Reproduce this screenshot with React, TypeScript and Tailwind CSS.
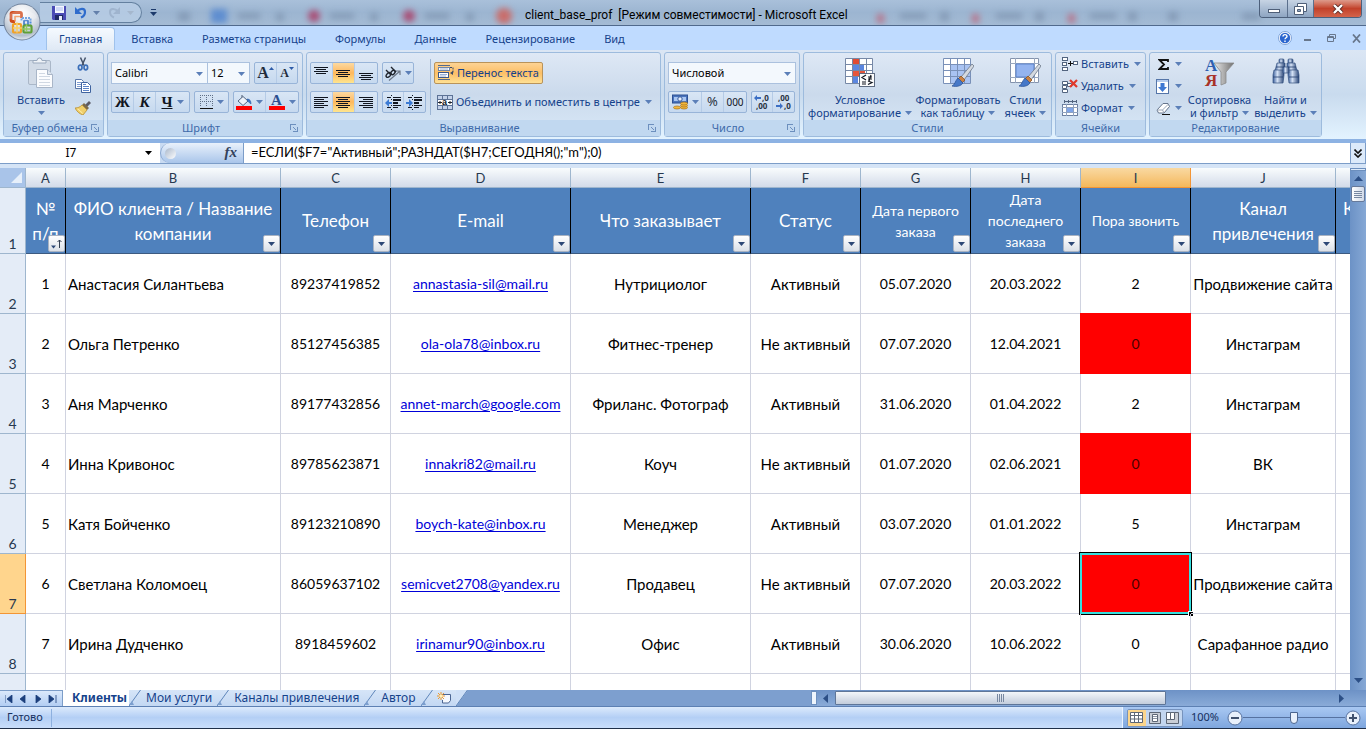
import { useState } from 'react';
import type { ReactNode } from 'react';
import clsx from 'clsx';

/* ---------- data ---------- */

const columns = [
  { letter: 'A', width: 40, title: '№ п/п', sorted: true },
  { letter: 'B', width: 215, title: 'ФИО клиента / Название компании' },
  { letter: 'C', width: 110, title: 'Телефон' },
  { letter: 'D', width: 180, title: 'E-mail' },
  { letter: 'E', width: 180, title: 'Что заказывает' },
  { letter: 'F', width: 110, title: 'Статус' },
  { letter: 'G', width: 110, title: 'Дата первого заказа', small: true },
  { letter: 'H', width: 110, title: 'Дата последнего заказа', small: true },
  { letter: 'I', width: 110, title: 'Пора звонить', small: true },
  { letter: 'J', width: 145, title: 'Канал привлечения' },
];

// columns with words rather than digits or addresses
const wordColumns = [1, 4, 5, 9];

const clients = [
  ['1', 'Анастасия Силантьева', '89237419852', 'annastasia-sil@mail.ru', 'Нутрициолог', 'Активный', '05.07.2020', '20.03.2022', '2', 'Продвижение сайта'],
  ['2', 'Ольга Петренко', '85127456385', 'ola-ola78@inbox.ru', 'Фитнес-тренер', 'Не активный', '07.07.2020', '12.04.2021', '0', 'Инстаграм'],
  ['3', 'Аня Марченко', '89177432856', 'annet-march@google.com', 'Фриланс. Фотограф', 'Активный', '31.06.2020', '01.04.2022', '2', 'Инстаграм'],
  ['4', 'Инна Кривонос', '89785623871', 'innakri82@mail.ru', 'Коуч', 'Не активный', '01.07.2020', '02.06.2021', '0', 'ВК'],
  ['5', 'Катя Бойченко', '89123210890', 'boych-kate@inbox.ru', 'Менеджер', 'Активный', '03.07.2020', '01.01.2022', '5', 'Инстаграм'],
  ['6', 'Светлана Коломоец', '86059637102', 'semicvet2708@yandex.ru', 'Продавец', 'Не активный', '07.07.2020', '20.03.2022', '0', 'Продвижение сайта'],
  ['7', 'Ирина Дудченко', '8918459602', 'irinamur90@inbox.ru', 'Офис', 'Активный', '30.06.2020', '10.06.2022', '0', 'Сарафанное радио'],
];

const ribbonTabs = ['Главная', 'Вставка', 'Разметка страницы', 'Формулы', 'Данные', 'Рецензирование', 'Вид'];
const sheets = ['Клиенты', 'Мои услуги', 'Каналы привлечения', 'Автор'];

/* ---------- icons ---------- */

function Caret({ className = 'text-[#5b7fb8]' }: { className?: string }) {
  return (
    <svg width="7" height="4" viewBox="0 0 7 4" className={clsx('shrink-0', className)} aria-hidden="true">
      <path d="M0 0h7L3.500 4z" fill="currentColor" />
    </svg>
  );
}

function OfficeLogo() {
  return (
    <svg width="38" height="38" viewBox="0 0 38 38" aria-hidden="true">
      <defs>
        <radialGradient id="orb" cx="50%" cy="25%" r="80%">
          <stop offset="0" stopColor="#ffffff" />
          <stop offset="0.500" stopColor="#dfe3ea" />
          <stop offset="0.800" stopColor="#b4bfcd" />
          <stop offset="1" stopColor="#f4f8fc" />
        </radialGradient>
      </defs>
      <circle cx="19" cy="19" r="18.500" fill="#71839c" />
      <circle cx="19" cy="19" r="17.500" fill="url(#orb)" />
      <g fill="none" strokeLinejoin="round">
        <path d="M12 18.500H9.500a1.500 1.500 0 0 1-1.500-1.500v-6A1.500 1.500 0 0 1 9.500 9.500h7.500A1.500 1.500 0 0 1 18.500 11v4" stroke="#cf4a1b" strokeWidth="2.800" />
        <path d="M12 18.500v-5h5" stroke="#f08a4a" strokeWidth="1.600" />
        <path d="M18.500 17.500v-2.500h9v7.500H25" stroke="#4d8edb" strokeWidth="2" strokeDasharray="2 1" />
        <rect x="21" y="17.500" width="4" height="4" stroke="#3d78ca" strokeWidth="1.600" />
        <rect x="10" y="21" width="8" height="8.500" rx="1" stroke="#f0a22a" strokeWidth="2.200" />
        <path d="M14 19.500v10M10 25h9" stroke="#f9cf66" strokeWidth="1.600" />
        <rect x="20.500" y="22.500" width="8" height="7" rx="1" stroke="#5f9f38" strokeWidth="2.200" />
        <path d="M23.500 21v8M19 26h9" stroke="#93c963" strokeWidth="1.600" />
      </g>
      <path d="M4 15C6 5 32 5 34 15c-8 4-22 4-30 0z" fill="#fff" opacity=".22" />
    </svg>
  );
}

function SaveIcon() {
  return (
    <svg width="14" height="14" viewBox="0 0 14 14" aria-hidden="true">
      <path d="M0 0h14v14H1l-1-1z" fill="#4a4bb5" />
      <path d="M3 0h9v7H3z" fill="#f3f6ff" />
      <path d="M4 2h7M4 4h7" stroke="#aebcf0" />
      <path d="M3 9h8v5H3z" fill="#202a66" />
      <path d="M7 10h3v4H7z" fill="#e7ecfb" />
    </svg>
  );
}

function UndoIcon() {
  return (
    <svg width="13" height="13" viewBox="0 0 13 13" aria-hidden="true">
      <path d="M3 5.500C6 2 11 2 11 6c0 2.500-1.500 4.500-4 5.500" fill="none" stroke="#2f6ccc" strokeWidth="2.200" />
      <path d="M1 1v7h7z" fill="#2f6ccc" />
    </svg>
  );
}

function RedoIcon() {
  return (
    <svg width="13" height="13" viewBox="0 0 13 13" aria-hidden="true">
      <path d="M10 5.500C7 2 2 2 2 6c0 2.500 1.500 4.500 4 5.500" fill="none" stroke="#9fb4ce" strokeWidth="2" />
      <path d="M12 1v7H5z" fill="#9fb4ce" />
    </svg>
  );
}

function PasteIcon() {
  return (
    <svg width="28" height="32" viewBox="0 0 28 32" aria-hidden="true">
      <rect x="1.500" y="3.500" width="22" height="24" rx="1.500" fill="#d2dbe7" stroke="#aab7c8" />
      <path d="M6 6V3.500h4a2.500 2.500 0 0 1 5 0h4V6z" fill="#eef2f7" stroke="#9aa9bd" />
      <path d="M9.500 12.500h11l5 5v13h-16z" fill="#fbfcfe" stroke="#a9b6c8" />
      <path d="M20.500 12.500v5h5" fill="#dfe6ef" stroke="#a9b6c8" />
      <path d="M12 16.500h6M12 19.500h11M12 22.500h11M12 25.500h11M12 28.500h11" stroke="#d0d8e3" />
    </svg>
  );
}

function CutIcon() {
  return (
    <svg width="12" height="14" viewBox="0 0 12 14" aria-hidden="true">
      <path d="M3.500 .5l3.500 8M8.500 .5L5 8.500" stroke="#44526a" strokeWidth="1.500" fill="none" />
      <ellipse cx="3.200" cy="10.500" rx="1.800" ry="2.300" fill="none" stroke="#3b6fb9" strokeWidth="1.700" />
      <ellipse cx="8.800" cy="10.500" rx="1.800" ry="2.300" fill="none" stroke="#3b6fb9" strokeWidth="1.700" />
    </svg>
  );
}

function CopyIcon() {
  return (
    <svg width="16" height="14" viewBox="0 0 16 14" aria-hidden="true">
      <path d="M.5 .5h6l2 2v7h-8z" fill="#fff" stroke="#5876a8" />
      <path d="M2 3.500h4M2 5.500h5M2 7.500h5" stroke="#7d9bd0" />
      <path d="M6.500 3.500h6l3 3v7h-9z" fill="#fff" stroke="#3f639f" />
      <path d="M8 7.500h6M8 9.500h6M8 11.500h6M8 5.500h3" stroke="#5c83c6" />
    </svg>
  );
}

function BrushIcon() {
  return (
    <svg width="16" height="14" viewBox="0 0 16 14" aria-hidden="true">
      <path d="M10 4l4-4 2 2-4 4z" fill="#5b5b66" />
      <path d="M7 4l2-2 5 5-2 2z" fill="#7b6a4a" />
      <path d="M7 4l5 5-4 5C5 13 2 11 0 7c3 0 5-1 7-3z" fill="#f0cf6b" stroke="#b98f2e" strokeWidth=".8" />
      <path d="M2.500 8c2 1 3.500 2.500 5 4.500" stroke="#fff0b0" fill="none" />
    </svg>
  );
}

function Lines({ rows, tall }: { rows: [number, number, number][]; tall?: boolean }) {
  return (
    <svg width="15" height={tall ? 13 : 15} viewBox={tall ? '0 0 15 13' : '0 0 15 15'} shapeRendering="crispEdges" aria-hidden="true">
      {rows.map(([x, y, w]) => (
        <rect key={y} x={x} y={y} width={w} height="1" fill="#10151f" />
      ))}
    </svg>
  );
}

function OrientationIcon() {
  return (
    <svg width="16" height="15" viewBox="0 0 16 15" aria-hidden="true">
      <path d="M4 14.500L14.500 5.500M11 5h4v4" stroke="#6b7687" fill="none" strokeWidth="1.200" />
      <path d="M1 4l5 5M6 1l5 5" stroke="#20252e" strokeWidth="1.400" />
      <ellipse cx="3.500" cy="9" rx="2.800" ry="1.800" transform="rotate(-45 3.500 9)" fill="none" stroke="#20252e" strokeWidth="1.400" />
      <ellipse cx="8" cy="6.500" rx="2.400" ry="1.700" transform="rotate(-45 8 6.500)" fill="none" stroke="#20252e" strokeWidth="1.400" />
    </svg>
  );
}

function IndentIcon({ right }: { right?: boolean }) {
  return (
    <svg width="17" height="15" viewBox="0 0 17 15" aria-hidden="true">
      <g fill="#10151f" shapeRendering="crispEdges">
        <rect x="2" y="2" width="4" height="1" />
        <rect x="8" y="2" width="8" height="1" />
        <rect x="8" y="4" width="8" height="2" />
        <rect x="8" y="7" width="5" height="2" />
        <rect x="8" y="10" width="8" height="1" />
        <rect x="2" y="12" width="4" height="1" />
        <rect x="8" y="12" width="5" height="1" />
        <rect x="6" y="0" width="1" height="1" />
        <rect x="6" y="4" width="1" height="1" />
        <rect x="6" y="10" width="1" height="1" />
        <rect x="6" y="14" width="1" height="1" />
      </g>
      <path d={right ? 'M0 7h3V4l4 4-4 4V9H0z' : 'M7 7H4V4L0 8l4 4V9h3z'} fill="#3c7bd4" />
    </svg>
  );
}

function WrapIcon() {
  return (
    <svg width="16" height="16" viewBox="0 0 16 16" aria-hidden="true">
      <path d="M0 .5h12M0 14.500h12" stroke="#52698f" />
      <rect x=".5" y="2.500" width="11" height="3" fill="#fff" stroke="#6f86ab" />
      <rect x=".5" y="7.500" width="10" height="5" fill="#fff" stroke="#3d598b" />
      <path d="M2 9.500h7M2 11h6M2 4h8" stroke="#9db2d6" />
      <path d="M12 2.500h3v5" stroke="#3a4a66" fill="none" strokeDasharray="2 1" />
      <path d="M12 8l3-2v4z" fill="#3a4a66" />
    </svg>
  );
}

function MergeIcon() {
  return (
    <svg width="16" height="15" viewBox="0 0 16 15" aria-hidden="true">
      <rect x=".5" y=".5" width="15" height="14" fill="#fff" stroke="#5c7296" />
      <path d="M1 2.500h14M1 12.500h14" stroke="#c3d2ea" strokeWidth="3" />
      <path d="M5.500 0v4M10.500 0v4M5.500 11v4M10.500 11v4M0 4.500h16M0 10.500h16" stroke="#5c7296" />
      <path d="M1 7.500h4M11 7.500h4M3 6v3M13 6v3" stroke="#20252e" />
      <text x="5" y="10" fontFamily="Liberation Sans, sans-serif" fontSize="9" fontWeight="700" fill="#101622">a</text>
    </svg>
  );
}

function BorderIcon() {
  return (
    <svg width="13" height="14" viewBox="0 0 13 14" shapeRendering="crispEdges" aria-hidden="true">
      <path d="M.5 0v12M6.500 0v12M12.500 0v12M0 .5h13M0 6.500h13" stroke="#5f6f87" strokeDasharray="1 1" />
      <rect y="13" width="13" height="1" fill="#111" />
    </svg>
  );
}

function FillIcon() {
  return (
    <svg width="16" height="15" viewBox="0 0 16 15" aria-hidden="true">
      <path d="M6 0v5" stroke="#44526a" />
      <path d="M7 1.500l5 4.500-5 4.500L2 6z" fill="#eef3fa" stroke="#526480" />
      <path d="M11 4c3 0 4 2 4 5-1.500-1-2-2-3.500-3z" fill="#3a74c8" stroke="#2d5c9f" strokeWidth=".6" />
      <path d="M0 11h16v4H0z" fill="#ff0000" />
    </svg>
  );
}

function LauncherIcon() {
  return (
    <svg width="8" height="8" viewBox="0 0 8 8" shapeRendering="crispEdges" aria-hidden="true">
      <path d="M.5 6V.5H6" fill="none" stroke="#6c8fbe" />
      <path d="M3 3l3 3M7.500 3v4.500H3" fill="none" stroke="#6c8fbe" />
    </svg>
  );
}

function MoneyIcon() {
  return (
    <svg width="16" height="16" viewBox="0 0 16 16" aria-hidden="true">
      <rect x=".5" y="1" width="15" height="8" fill="#4a74bd" stroke="#2d5094" />
      <path d="M2 3h12v4H2z" fill="#a9c6f2" />
      <circle cx="8" cy="5" r="2.200" fill="#e6effd" stroke="#36599a" />
      <g fill="#f2b83d" stroke="#a8701a" strokeWidth=".7">
        <ellipse cx="12" cy="13.500" rx="3.500" ry="1.500" />
        <ellipse cx="12" cy="11.500" rx="3.500" ry="1.500" />
        <ellipse cx="12" cy="9.500" rx="3.500" ry="1.500" />
        <ellipse cx="5" cy="13.500" rx="3.500" ry="1.500" />
      </g>
    </svg>
  );
}

function DecimalIcon({ less }: { less?: boolean }) {
  return (
    <svg width="16" height="16" viewBox="0 0 16 16" aria-hidden="true">
      <g fontFamily="Noto Sans, sans-serif" fontSize="8" fontWeight="700" fill="#2a3443">
        <text x={less ? 2 : 8} y="7">{less ? ',00' : ',0'}</text>
        <text x={less ? 8 : 2} y="15">{less ? ',0' : ',00'}</text>
      </g>
      <path d={less ? 'M0 11h4V9l3 3-3 3v-2H0z' : 'M7 3H3V1L0 4l3 3V5h4z'} fill="#3c6fc4" />
    </svg>
  );
}

function CondFormatIcon() {
  return (
    <svg width="30" height="29" viewBox="0 0 30 29" aria-hidden="true">
      <path d="M.5 .5h27v25H.5z" fill="#fff" />
      <path d="M7 0h7v6H7z" fill="#e04a32" />
      <path d="M7 6h12v6H7z" fill="#5a86e0" />
      <path d="M7 13h13v6H7z" fill="#e5563c" />
      <path d="M7 19h6v6H7z" fill="#5a86e0" />
      <path d="M.5 .5h27v25H.5zM.5 6.500h27M.5 12.500h27M.5 18.500h27M7.500 0v26M14.500 0v26M21.500 0v26" fill="none" stroke="#7688a6" />
      <rect x="14.500" y="15.500" width="15" height="13" fill="#fdfdfd" stroke="#5e6b80" />
      <path d="M21 17l-4 2.500 4 2.500M17 24h4M17 26h4M23 19h4M23 21h4M26 17l-2 6M23 23l4 1.500-4 2" stroke="#10151f" fill="none" strokeWidth="1.200" />
    </svg>
  );
}

function PaintBrush() {
  return (
    <g>
      <path d="M29 6l2 2L21 22l-3-3z" fill="#d4d9e0" stroke="#6c7788" strokeWidth=".8" />
      <path d="M18 18l4 4-3 3-4-4z" fill="#c98245" stroke="#8d5422" strokeWidth=".8" />
      <path d="M15 20l5 5c-2 3-6 4-11 3 3-1 3-5 6-8z" fill="#4678c8" stroke="#2d5599" strokeWidth=".8" />
    </g>
  );
}

function TableStyleIcon() {
  return (
    <svg width="31" height="30" viewBox="0 0 31 30" aria-hidden="true">
      <path d="M.5 .5h27v25H.5z" fill="#fff" />
      <path d="M7 7h21v18H7z" fill="#a9c3f2" />
      <path d="M.5 .5h27v25H.5zM.5 6.500h27M.5 12.500h27M.5 18.500h27M7.500 0v26M14.500 0v26M21.500 0v26" fill="none" stroke="#7990b8" />
      <PaintBrush />
    </svg>
  );
}

function CellStyleIcon() {
  return (
    <svg width="31" height="30" viewBox="0 0 31 30" aria-hidden="true">
      <path d="M.5 .5h28v24H.5z" fill="#fff" stroke="#8493ad" />
      <path d="M5.500 0v25M24.500 0v25M0 5.500h29M0 19.500h29" stroke="#9aa8bf" />
      <path d="M6 6h18v13H6z" fill="#94b4f0" stroke="#5d83ca" />
      <PaintBrush />
    </svg>
  );
}

function InsertCellsIcon() {
  return (
    <svg width="16" height="14" viewBox="0 0 16 14" shapeRendering="crispEdges" aria-hidden="true">
      <path d="M.5 .5h5v3h-5zM.5 5.500h4v3h-4zM.5 10.500h5v3h-5zM11.500 4.500h4v3h-4z" fill="#fff" stroke="#52647f" />
      <path d="M6 6.500h5M8.500 4v5" stroke="#111" strokeWidth="1" />
    </svg>
  );
}

function DeleteCellsIcon() {
  return (
    <svg width="16" height="14" viewBox="0 0 16 14" aria-hidden="true">
      <path d="M.5 2.500h5v3h-5zM.5 6.500h4v3h-4zM.5 10.500h5v3h-5zM5.500 4.500h4v3h-4z" fill="#fff" stroke="#52647f" />
      <path d="M8 1l7 7M15 1L8 8" stroke="#e0392b" strokeWidth="2.200" />
    </svg>
  );
}

function FormatCellsIcon() {
  return (
    <svg width="16" height="16" viewBox="0 0 16 16" shapeRendering="crispEdges" aria-hidden="true">
      <path d="M2 1.500h12M2.500 0v3M6.500 0v3M10.500 0v3M14.500 0v3" stroke="#52647f" />
      <path d="M.5 4.500h15v11H.5z" fill="#fff" stroke="#6d80a0" />
      <path d="M4.500 4v12M11.500 4v12M0 7.500h16M0 12.500h16" stroke="#8fa1be" />
      <path d="M5 8h6v4H5z" fill="#7fa5e8" />
    </svg>
  );
}

function FillDownIcon() {
  return (
    <svg width="13" height="15" viewBox="0 0 13 15" aria-hidden="true">
      <rect x=".5" y=".5" width="12" height="14" fill="#fff" stroke="#5575a8" />
      <path d="M1 1h11v2H1z" fill="#b6ccee" />
      <path d="M4.500 4h4v4h2.500L6.500 13 2 8h2.500z" fill="#3f78d2" />
    </svg>
  );
}

function EraserIcon() {
  return (
    <svg width="15" height="13" viewBox="0 0 15 13" aria-hidden="true">
      <path d="M7 1.500h5l1.500 3L8 11H2.500L1 8z" fill="#fff" stroke="#66758c" />
      <path d="M1 8h5.500L12.500 2M6.500 8L8 11" fill="none" stroke="#9aa6b8" />
      <path d="M6 12.500h8" stroke="#111" />
    </svg>
  );
}

function SortFilterIcon() {
  return (
    <svg width="31" height="30" viewBox="0 0 31 30" aria-hidden="true">
      <defs>
        <linearGradient id="funnel" x1="0" x2="1">
          <stop offset="0" stopColor="#e9e9e9" />
          <stop offset="1" stopColor="#707070" />
        </linearGradient>
      </defs>
      <path d="M10 5h20l-8 9v11l-5 2V14z" fill="url(#funnel)" stroke="#8a8a8a" strokeWidth=".8" />
      <g fontFamily="Liberation Serif, serif" fontSize="17" fontWeight="700">
        <text x="1" y="13" fill="#2e5fb0">А</text>
        <text x="1" y="28" fill="#a83228">Я</text>
      </g>
    </svg>
  );
}

function BinocularsIcon() {
  return (
    <svg width="28" height="26" viewBox="0 0 28 26" aria-hidden="true">
      <defs>
        <linearGradient id="tube" x1="0" x2="1">
          <stop offset="0" stopColor="#3b5f9c" />
          <stop offset="0.400" stopColor="#d5e2f5" />
          <stop offset="1" stopColor="#2a4678" />
        </linearGradient>
      </defs>
      <g fill="url(#tube)" stroke="#35527f" strokeWidth=".7">
        <rect x="7" y="1" width="5" height="4" rx="1" />
        <rect x="16" y="1" width="5" height="4" rx="1" />
        <path d="M5 5h8v8H3z" />
        <path d="M15 5h8l2 8H15z" />
        <path d="M2 12h10v5l-1 8H1v-8z" />
        <path d="M16 12h10l1 5v8H17l-1-8z" />
        <path d="M11 9h6v6h-6z" />
      </g>
      <path d="M1 19h10M17 19h10M4 9h8M16 9h8" stroke="#233f70" strokeWidth=".8" />
    </svg>
  );
}

function NewSheetIcon() {
  return (
    <svg width="15" height="12" viewBox="0 0 15 12" aria-hidden="true">
      <path d="M4.500 2.500h9v6l-2 2.500h-6V8" fill="#f4f8fe" stroke="#4c6693" />
      <path d="M4 0v8M0 4h8M1 1l6 6M7 1L1 7" stroke="#ee9a2e" />
      <circle cx="4" cy="4" r="1.500" fill="#fff0b8" />
    </svg>
  );
}

function Slash({ last }: { last?: boolean }) {
  return (
    <svg width="12" height="16" viewBox="0 0 12 16" className="shrink-0" aria-hidden="true">
      {last && <path d="M0 0h12L1 15H0z" fill="#cfe0f7" />}
      <path d="M0 16L11.500 0" stroke="#5f86ba" fill="none" />
      {!last && <path d="M0 15l3-4 2 4z" fill="#7c9fce" />}
    </svg>
  );
}

/* ---------- ribbon parts ---------- */

function Group({ label, className, launcher, children }: { label: string; className: string; launcher?: boolean; children: ReactNode }) {
  return (
    <section
      aria-label={label}
      className={clsx(
        'flex h-[85px] shrink-0 flex-col rounded-[3px] border border-[#9dbbdd] bg-linear-to-b from-[#dee8f5] via-[#cbdaec] to-[#d8e8f7]',
        className,
      )}
    >
      <div className="flex min-h-0 flex-1 px-[3px]">{children}</div>
      <div className="flex h-4 items-center bg-[#c1d8f0] px-1 text-[#3e6aaa]">
        <span className="flex-1 text-center whitespace-nowrap">{label}</span>
        {launcher && (
          <button aria-label={`${label}: параметры`}>
            <LauncherIcon />
          </button>
        )}
      </div>
    </section>
  );
}

function ButtonSet({ children }: { children: ReactNode }) {
  return (
    <div className="flex h-[22px] divide-x divide-[#b5cbe6] rounded-[2px] border border-[#98b4d8] bg-linear-to-b from-[#d9e6f5] to-[#c6d9ef]">
      {children}
    </div>
  );
}

function Tool({ label, width = 'w-[22px]', active, children }: { label: string; width?: string; active?: boolean; children: ReactNode }) {
  return (
    <button
      aria-label={label}
      className={clsx('flex items-center justify-center gap-1', width, active && 'bg-linear-to-b from-[#fcd9a0] via-[#fdb85c] to-[#fee58f]')}
    >
      {children}
    </button>
  );
}

function BigButton({ icon, lines, className }: { icon: ReactNode; lines: [string, string]; className: string }) {
  return (
    <button className={clsx('flex shrink-0 flex-col items-center pt-1 leading-[13px]', className)}>
      <span className="flex h-[36px] items-start pt-px">{icon}</span>
      <span className="whitespace-nowrap">{lines[0]}</span>
      <span className="flex h-[13px] items-center gap-1 whitespace-nowrap">
        {lines[1]}
        <Caret />
      </span>
    </button>
  );
}

function Dropdown({ label, value, className }: { label: string; value: string; className: string }) {
  return (
    <div className={clsx('relative flex h-[22px] border border-[#abc1de] bg-[#f3f8fd]', className)}>
      <select aria-label={label} defaultValue={value} className="w-full appearance-none bg-transparent pl-[3px] text-black outline-none">
        <option>{value}</option>
      </select>
      <Caret className="pointer-events-none absolute top-[9px] right-[4px] text-[#5b7fb8]" />
    </div>
  );
}

function TitleBar() {
  return (
    <header className="relative flex h-[26px] shrink-0 items-center overflow-hidden border-b border-[#50698c] bg-linear-to-b from-[#a9c0da] via-[#9cb5d1] to-[#a4bbd4]">
      <svg className="absolute inset-0 h-full w-full blur-[3px]" aria-hidden="true">
        <g fill="#7489a6" opacity=".6">
          <rect x="178" y="12" width="12" height="9" />
          <rect x="238" y="13" width="22" height="6" />
          <rect x="276" y="13" width="8" height="8" />
          <rect x="330" y="13" width="24" height="6" />
          <rect x="370" y="13" width="8" height="8" />
          <rect x="425" y="13" width="24" height="6" />
          <rect x="466" y="13" width="8" height="8" />
          <rect x="900" y="13" width="26" height="6" />
          <rect x="940" y="12" width="9" height="9" />
          <rect x="996" y="13" width="26" height="6" />
          <rect x="1035" y="12" width="9" height="9" />
          <rect x="1090" y="13" width="26" height="6" />
          <rect x="1128" y="12" width="9" height="9" />
          <rect x="1168" y="12" width="10" height="9" />
          <rect x="1242" y="13" width="18" height="7" />
        </g>
        <rect x="211" y="9" width="16" height="14" fill="#4f83d0" opacity=".8" />
        <circle cx="314" cy="16" r="6" fill="#a84a72" />
        <circle cx="409" cy="16" r="6" fill="#a84a72" />
        <circle cx="504" cy="16" r="8" fill="#c96d6b" />
        <rect x="877" y="14" width="7" height="9" fill="#c2566a" opacity=".7" />
        <rect x="972" y="14" width="7" height="9" fill="#c2566a" opacity=".7" />
        <rect x="1068" y="14" width="7" height="9" fill="#c2566a" opacity=".7" />
      </svg>

      <div className="relative ml-10 flex h-[21px] w-[102px] items-center rounded-r-full border border-l-0 border-[#64809f] bg-[#b9cee6]/80 pl-3">
        <button aria-label="Сохранить"><SaveIcon /></button>
        <button aria-label="Отменить" className="ml-2 flex items-center gap-1.5"><UndoIcon /><Caret className="text-[#6380ab]" /></button>
        <button aria-label="Вернуть" className="ml-2 flex items-center gap-1.5"><RedoIcon /><Caret className="text-[#a5b7cd]" /></button>
      </div>
      <button aria-label="Настройка панели быстрого доступа" className="relative ml-2 flex flex-col items-center gap-0.5">
        <span className="h-px w-[5px] bg-[#1c3a6b]" />
        <Caret className="text-[#1c3a6b]" />
      </button>

      <h1 className="relative ml-[368px] pt-1 font-['Roboto','Noto_Sans',sans-serif] text-xs whitespace-pre text-black">client_base_prof  [Режим совместимости] - Microsoft Excel</h1>

      <div className="relative mr-1 ml-auto flex h-[18px] self-start overflow-hidden rounded-b-[4px] border border-t-0 border-[#4c5f7b] text-white">
        <button aria-label="Свернуть" className="flex w-7 items-center justify-center border-r border-[#5b6f8c] bg-linear-to-b from-[#c7d4e4] to-[#8ea5c2]">
          <span className="mt-1 h-[4px] w-[12px] border border-[#4f5f78] bg-white" />
        </button>
        <button aria-label="Восстановить" className="flex w-[26px] items-center justify-center border-r border-[#5b6f8c] bg-linear-to-b from-[#c7d4e4] to-[#8ea5c2]">
          <svg width="13" height="12" viewBox="0 0 13 12" aria-hidden="true">
            <path d="M3.500 .5h9v8h-9z" fill="#fff" stroke="#4f5f78" />
            <path d="M.5 3.500h9v8h-9z" fill="#fff" stroke="#4f5f78" />
            <path d="M3.500 6.500h3v2h-3z" fill="#8ea5c2" stroke="#4f5f78" />
          </svg>
        </button>
        <button aria-label="Закрыть" className="flex w-[47px] items-center justify-center bg-linear-to-b from-[#dd9a8b] via-[#c2412a] to-[#d4634a]">
          <svg width="12" height="10" viewBox="0 0 12 10" aria-hidden="true">
            <path d="M2 1l8 8M10 1L2 9" stroke="#5a2a25" strokeWidth="4" />
            <path d="M2 1l8 8M10 1L2 9" stroke="#fff" strokeWidth="2.400" />
          </svg>
        </button>
      </div>
    </header>
  );
}

function TabStrip() {
  const [active, setActive] = useState('Главная');
  return (
    <nav className="flex h-6 shrink-0 items-end gap-[3px] bg-[#bfdbff] pl-[46px] text-[#15428b]">
      {ribbonTabs.map((tab) => (
        <button
          key={tab}
          onClick={() => setActive(tab)}
          className={clsx(
            'h-[23px] rounded-t-[4px] border border-b-0 px-3 whitespace-nowrap',
            tab === active ? 'border-[#9fc2ec] bg-linear-to-b from-[#f5faff] to-[#dfe9f5]' : 'border-transparent',
          )}
        >
          {tab}
        </button>
      ))}
      <div className="mr-[5px] ml-auto flex h-full items-center gap-3 text-[#68778c]">
        <button aria-label="Справка">
          <svg width="14" height="14" viewBox="0 0 14 14" aria-hidden="true">
            <circle cx="7" cy="7" r="6.500" fill="#fff" stroke="#7fa3d8" />
            <circle cx="7" cy="7" r="5.200" fill="#2b66cf" />
            <path d="M5 5.500c0-2.500 4-2.500 4 0 0 1.300-2 1.300-2 2.700M7 9.500v1.500" fill="none" stroke="#fff" strokeWidth="1.400" />
          </svg>
        </button>
        <button aria-label="Свернуть книгу" className="mt-1 h-0.5 w-[7px] bg-[#68778c]" />
        <button aria-label="Восстановить книгу" className="ml-1">
          <svg width="9" height="8" viewBox="0 0 9 8" aria-hidden="true">
            <path d="M2.500 2V.5h6v4H7M.5 2.500h6v5h-6zM.5 3.500h6" fill="none" stroke="currentColor" />
          </svg>
        </button>
        <button aria-label="Закрыть книгу" className="ml-1">
          <svg width="9" height="9" viewBox="0 0 9 9" aria-hidden="true">
            <path d="M1 .5l7 8M8 .5l-7 8" stroke="currentColor" strokeWidth="1.800" />
          </svg>
        </button>
      </div>
    </nav>
  );
}

function Ribbon() {
  return (
    <div className="flex h-[93px] shrink-0 items-start gap-[3px] overflow-hidden border-b-4 border-[#8db2e3] bg-linear-to-b from-[#dbe6f4] via-[#c9dbee] to-[#e3f3ff] px-[3px] pt-[2px] text-[#15428b]">
      <Group label="Буфер обмена" className="w-[101px]" launcher>
        <button className="flex w-[68px] flex-col items-center pt-1 leading-[13px]">
          <span className="flex h-[36px] items-start"><PasteIcon /></span>
          <span>Вставить</span>
          <span className="flex h-[13px] items-center"><Caret /></span>
        </button>
        <div className="flex flex-col">
          <button aria-label="Вырезать" className="flex h-[22px] w-4 items-center justify-center"><CutIcon /></button>
          <button aria-label="Копировать" className="flex h-[22px] w-4 items-center justify-center"><CopyIcon /></button>
          <button aria-label="Формат по образцу" className="flex h-[22px] w-4 items-center justify-center"><BrushIcon /></button>
        </div>
      </Group>

      <Group label="Шрифт" className="w-[196px]" launcher>
        <div className="flex flex-col gap-[7px] pt-[9px]">
          <div className="flex gap-1">
            <div className="flex">
              <Dropdown label="Шрифт" value="Calibri" className="w-[97px]" />
              <Dropdown label="Размер шрифта" value="12" className="w-[42px] border-l-0" />
            </div>
            <ButtonSet>
              <Tool label="Увеличить размер шрифта">
                <span className="font-['Liberation_Serif',serif] text-base font-bold text-[#222c3c]">A</span>
                <svg width="5" height="3" className="-ml-1 mb-2.5" aria-hidden="true"><path d="M0 3h5L2.500 0z" fill="#2f5ca8" /></svg>
              </Tool>
              <Tool label="Уменьшить размер шрифта" width="w-[20px]">
                <span className="font-['Liberation_Serif',serif] text-xs font-bold text-[#222c3c]">A</span>
                <svg width="5" height="3" className="-ml-1 mb-2.5" aria-hidden="true"><path d="M0 0h5L2.500 3z" fill="#2f5ca8" /></svg>
              </Tool>
            </ButtonSet>
          </div>
          <div className="flex gap-1 font-['Liberation_Serif',serif] text-[15px] font-bold text-[#10151f]">
            <ButtonSet>
              <Tool label="Полужирный">Ж</Tool>
              <Tool label="Курсив"><i>К</i></Tool>
              <Tool label="Подчеркнутый" width="w-[33px]"><u>Ч</u><Caret /></Tool>
            </ButtonSet>
            <ButtonSet>
              <Tool label="Границы" width="w-[33px]"><BorderIcon /><Caret /></Tool>
            </ButtonSet>
            <ButtonSet>
              <Tool label="Цвет заливки" width="w-[32px]"><FillIcon /><Caret /></Tool>
              <Tool label="Цвет текста" width="w-[32px]">
                <span className="h-4 w-4 border-b-4 border-[#ff0000] text-center leading-3 text-[#2b4f8f]">A</span>
                <Caret />
              </Tool>
            </ButtonSet>
          </div>
        </div>
      </Group>

      <Group label="Выравнивание" className="w-[355px]" launcher>
        <div className="flex flex-col gap-[7px] pt-[9px]">
          <div className="flex gap-1">
            <ButtonSet>
              <Tool label="По верхнему краю"><Lines rows={[[0, 1, 14], [2, 3, 10], [0, 5, 14], [2, 7, 10]]} /></Tool>
              <Tool label="По середине" active><Lines rows={[[0, 4, 14], [2, 6, 10], [0, 8, 14], [2, 10, 10]]} /></Tool>
              <Tool label="По нижнему краю"><Lines rows={[[0, 7, 14], [2, 9, 10], [0, 11, 14], [2, 13, 10]]} /></Tool>
            </ButtonSet>
            <ButtonSet>
              <Tool label="Ориентация" width="w-[30px]"><OrientationIcon /><Caret /></Tool>
            </ButtonSet>
          </div>
          <div className="flex gap-1">
            <ButtonSet>
              <Tool label="По левому краю"><Lines tall rows={[[0, 1, 14], [0, 3, 10], [0, 5, 14], [0, 7, 10], [0, 9, 14], [0, 11, 10]]} /></Tool>
              <Tool label="По центру" active><Lines tall rows={[[0, 1, 14], [2, 3, 10], [0, 5, 14], [2, 7, 10], [0, 9, 14], [2, 11, 10]]} /></Tool>
              <Tool label="По правому краю"><Lines tall rows={[[0, 1, 14], [4, 3, 10], [0, 5, 14], [4, 7, 10], [0, 9, 14], [4, 11, 10]]} /></Tool>
            </ButtonSet>
            <ButtonSet>
              <Tool label="Уменьшить отступ" width="w-[21px]"><IndentIcon /></Tool>
              <Tool label="Увеличить отступ" width="w-[21px]"><IndentIcon right /></Tool>
            </ButtonSet>
          </div>
        </div>
        <div className="mr-[3px] ml-1 mt-1.5 h-[56px] border-l border-[#9db6d6]" />
        <div className="flex flex-col items-start gap-[7px] pt-[9px]">
          <button className="flex h-[22px] items-center gap-[3px] rounded-[2px] border border-[#b9935a] bg-linear-to-b from-[#fdd394] via-[#fcbf66] to-[#fee094] px-[3px] whitespace-nowrap">
            <WrapIcon />
            Перенос текста
          </button>
          <button className="flex h-[22px] items-center gap-[3px] px-[3px] whitespace-nowrap">
            <MergeIcon />
            Объединить и поместить в центре
            <Caret className="ml-0.5 text-[#5b7fb8]" />
          </button>
        </div>
      </Group>

      <Group label="Число" className="w-[136px]" launcher>
        <div className="flex flex-col gap-[7px] pt-[9px]">
          <Dropdown label="Числовой формат" value="Числовой" className="w-[128px]" />
          <div className="flex gap-1">
            <ButtonSet>
              <Tool label="Денежный формат" width="w-[33px]"><MoneyIcon /><Caret /></Tool>
              <Tool label="Процентный формат"><span className="text-[13px] text-[#2a3443]">%</span></Tool>
              <Tool label="Формат с разделителями"><span className="text-[10px] text-[#10151f]">000</span></Tool>
            </ButtonSet>
            <ButtonSet>
              <Tool label="Увеличить разрядность" width="w-[21px]"><DecimalIcon /></Tool>
              <Tool label="Уменьшить разрядность" width="w-[21px]"><DecimalIcon less /></Tool>
            </ButtonSet>
          </div>
        </div>
      </Group>

      <Group label="Стили" className="w-[249px]">
        <BigButton icon={<CondFormatIcon />} lines={['Условное', 'форматирование']} className="w-[106px]" />
        <BigButton icon={<TableStyleIcon />} lines={['Форматировать', 'как таблицу']} className="w-[90px]" />
        <BigButton icon={<CellStyleIcon />} lines={['Стили', 'ячеек']} className="w-[45px]" />
      </Group>

      <Group label="Ячейки" className="w-[91px]">
        <div className="flex flex-col pl-[3px]">
          <button className="flex h-[22px] items-center gap-[3px]"><InsertCellsIcon />Вставить<Caret className="ml-0.5 text-[#5b7fb8]" /></button>
          <button className="flex h-[22px] items-center gap-[3px]"><DeleteCellsIcon />Удалить<Caret className="ml-0.5 text-[#5b7fb8]" /></button>
          <button className="flex h-[22px] items-center gap-[3px]"><FormatCellsIcon />Формат<Caret className="ml-0.5 text-[#5b7fb8]" /></button>
        </div>
      </Group>

      <Group label="Редактирование" className="w-[173px]">
        <div className="flex w-[34px] flex-col pl-[3px]">
          <button aria-label="Сумма" className="flex h-[22px] items-center gap-1.5 pl-0.5">
            <svg width="11" height="11" viewBox="0 0 11 11" aria-hidden="true">
              <path d="M10 3V1H1.500L6 5.500 1.500 10H10V8" fill="none" stroke="#111" strokeWidth="1.800" />
            </svg>
            <Caret />
          </button>
          <button aria-label="Заполнить" className="flex h-[22px] items-center gap-1.5"><FillDownIcon /><Caret /></button>
          <button aria-label="Очистить" className="flex h-[22px] items-center gap-1"><EraserIcon /><Caret /></button>
        </div>
        <BigButton icon={<SortFilterIcon />} lines={['Сортировка', 'и фильтр']} className="w-[67px]" />
        <BigButton icon={<BinocularsIcon />} lines={['Найти и', 'выделить']} className="w-[65px]" />
      </Group>
    </div>
  );
}

/* ---------- formula bar ---------- */

function FormulaBar() {
  return (
    <div className="flex h-[25px] shrink-0 border-b-4 border-[#d5e4f6] bg-white text-xs">
      <div className="flex w-[160px] items-center border-b border-[#7c9dc8] pr-2">
        <input aria-label="Имя ячейки" defaultValue="I7" className="w-[142px] text-center outline-none" />
        <Caret className="ml-auto text-black" />
      </div>
      <div className="flex w-[84px] items-center border-r border-b border-[#7c9dc8] bg-[#c9dbf2]">
        <div className="flex h-full flex-1 items-center justify-between rounded-l-full border-l border-[#8aa7cf] bg-linear-to-b from-[#e9f1fb] to-[#a9c5ea] px-1">
          <span className="h-[11px] w-[11px] rounded-full bg-linear-to-br from-[#a9b7ca] to-white" />
          <button aria-label="Вставить функцию" className="pr-0.5 font-['Liberation_Serif',serif] text-[15px] font-bold text-[#33425b] italic">
            fx
          </button>
        </div>
      </div>
      <input
        aria-label="Строка формул"
        defaultValue={'=ЕСЛИ($F7="Активный";РАЗНДАТ($H7;СЕГОДНЯ();"m");0)'}
        className="min-w-0 flex-1 border-b border-[#7c9dc8] pl-[7px] font-['Lato','Noto_Sans',sans-serif] text-[13px] text-black outline-none"
      />
      <button aria-label="Развернуть строку формул" className="flex w-4 items-center justify-center border border-t-0 border-[#7c9dc8] bg-[#dceafa]">
        <svg width="8" height="9" viewBox="0 0 8 9" aria-hidden="true">
          <path d="M.5 .5L4 4 7.500 .5M.5 4.500L4 8l3.500-3.500" fill="none" stroke="#111" strokeWidth="1.600" />
        </svg>
      </button>
    </div>
  );
}

/* ---------- sheet ---------- */

function FilterButton({ title, sorted }: { title: string; sorted?: boolean }) {
  return (
    <button
      aria-label={`Фильтр: ${title}`}
      className="absolute right-0 bottom-px flex h-[17px] w-[17px] items-center justify-center gap-px rounded-[2px] border border-[#a9b3c2] bg-linear-to-b from-white to-[#dbe0e8]"
    >
      <Caret className={clsx('text-[#2c4776]', sorted && 'mt-1.5 w-[5px]')} />
      {sorted && (
        <svg width="5" height="9" viewBox="0 0 5 9" aria-hidden="true">
          <path d="M2.500 9V1M.5 3l2-2 2 2" fill="none" stroke="#333f52" />
        </svg>
      )}
    </button>
  );
}

function Sheet() {
  return (
    <div className="min-w-0 flex-1 overflow-hidden bg-white">
      <table className="w-[1446px] table-fixed border-separate border-spacing-0 font-['Lato','Noto_Sans',sans-serif] text-black">
        <colgroup>
          <col className="w-[26px]" />
          {columns.map((c) => (
            <col key={c.letter} style={{ width: c.width }} />
          ))}
          <col className="w-[110px]" />
        </colgroup>
        <thead>
          <tr className="h-5 text-[13px] leading-[18px] text-[#27384f]">
            <th className="border-r border-b border-[#9eb6ce] bg-[#a9c4e9] p-0" aria-label="Выделить все">
              <svg width="11" height="11" viewBox="0 0 11 11" className="ml-auto mr-[3px]" aria-hidden="true">
                <path d="M11 0v11H0z" fill="#e6effa" />
              </svg>
            </th>
            {columns.map((c) => (
              <th
                key={c.letter}
                className={clsx(
                  'border-r border-b p-0 font-normal',
                  c.letter === 'I'
                    ? 'border-[#f29536] bg-linear-to-b from-[#f9d9a1] to-[#f4b85a]'
                    : 'border-[#9eb6ce] bg-linear-to-b from-[#f9fcfd] to-[#d3dbe9]',
                )}
              >
                {c.letter}
              </th>
            ))}
            <th className="border-b border-[#9eb6ce] bg-linear-to-b from-[#f9fcfd] to-[#d3dbe9]" />
          </tr>
          <tr className="h-[66px] bg-[#4f81bd] text-white">
            <th className="border-r border-b border-[#9eb6ce] bg-[#e4ecf7] p-0 align-bottom text-sm leading-[18px] font-normal text-[#27384f]">1</th>
            {columns.map((c) => (
              <th
                key={c.letter}
                className={clsx(
                  'relative border-r border-b border-r-black border-b-[#3c5a80] p-0 font-normal',
                  c.small ? 'text-sm leading-[21px]' : 'text-[17px] leading-[25px]',
                )}
              >
                {c.title}
                <FilterButton title={c.title} sorted={c.sorted} />
              </th>
            ))}
            <th className="border-b border-[#3c5a80] pt-0 pr-0 pb-6 pl-[7px] text-left text-[17px] leading-[25px] font-normal">К</th>
          </tr>
        </thead>
        <tbody>
          {clients.map((row, i) => {
            const rowSelected = i === 5;
            return (
              <tr key={row[0]} className="h-[60px] text-sm leading-5">
                <th
                  className={clsx(
                    'border-r border-b p-0 align-bottom leading-[18px] font-normal text-[#27384f]',
                    rowSelected ? 'border-[#f29536] bg-[#ffd58d]' : 'border-[#9eb6ce] bg-[#e4ecf7]',
                  )}
                >
                  {i + 2}
                </th>
                {row.map((value, j) => {
                  const overdue = j === 8 && value === '0' && row[5] === 'Не активный';
                  return (
                    <td
                      key={j}
                      className={clsx(
                        'relative border-r border-b border-[#d0d3e0] py-0 whitespace-nowrap',
                        j === 1 ? 'px-0.5' : 'px-0 text-center',
                        wordColumns.includes(j) && 'text-[15px]',
                      )}
                    >
                      {overdue && <span className="absolute -inset-px bg-[#ff0000]" />}
                      {j === 3 ? (
                        <a href={`mailto:${value}`} className="text-[#0000d8] underline underline-offset-2">{value}</a>
                      ) : (
                        <span className={clsx('relative', overdue && 'text-[#4a0000]')}>{value}</span>
                      )}
                      {j === 8 && rowSelected && (
                        <span className="absolute -inset-0.5 border border-black">
                          <span className="absolute inset-0 border-2 border-[#35e0e0]" />
                          <span className="absolute -right-0.5 -bottom-0.5 h-[5px] w-[5px] border-t border-l border-white bg-black" />
                        </span>
                      )}
                    </td>
                  );
                })}
                <td className="border-b border-[#d0d3e0]" />
              </tr>
            );
          })}
          <tr className="h-[60px]">
            <th className="border-r border-[#9eb6ce] bg-[#e4ecf7]" />
            {columns.map((c) => (
              <td key={c.letter} className="border-r border-[#d0d3e0]" />
            ))}
            <td />
          </tr>
        </tbody>
      </table>
    </div>
  );
}

function VerticalScroll() {
  return (
    <div className="flex w-4 shrink-0 flex-col items-center bg-linear-to-r from-[#6c92c6] to-[#86a8d5]">
      <span className="h-[3px] w-full border border-[#6c8fbe] bg-[#dceafa]" />
      <svg width="9" height="5" className="mt-[5px] mb-[5px]" aria-hidden="true"><path d="M0 5h9L4.500 0z" fill="#2c4f86" /></svg>
      <div className="flex h-[16px] w-[14px] flex-col items-center justify-center gap-px rounded-[2px] border border-[#66799a] bg-linear-to-r from-white to-[#d0d9e8]">
        {[0, 1, 2, 3].map((n) => (
          <span key={n} className="h-px w-2 bg-[#7888a1]" />
        ))}
      </div>
      <svg width="9" height="5" className="mt-auto mb-[7px]" aria-hidden="true"><path d="M0 0h9L4.500 5z" fill="#2c4f86" /></svg>
    </div>
  );
}

function SheetBar() {
  const [active, setActive] = useState('Клиенты');
  return (
    <div className="flex h-4 shrink-0 bg-[#7d9fcf] text-xs text-[#15428b]">
      <div className="flex w-[63px] items-center justify-around border-t border-r border-[#7c9dc8] bg-linear-to-b from-[#dbe9fb] to-[#b3cef3] px-0.5">
        {['M0 0v8M7 0L2 4l5 4z', 'M6 0L1 4l5 4z', 'M2 0l5 4-5 4z', 'M8 0v8M1 0l5 4-5 4z'].map((d, n) => (
          <button key={d} aria-label={['Первый лист', 'Предыдущий лист', 'Следующий лист', 'Последний лист'][n]}>
            <svg width="9" height="8" viewBox="0 0 9 8" aria-hidden="true">
              <path d={d} fill="#1c3f7c" stroke="#1c3f7c" strokeWidth=".8" />
            </svg>
          </button>
        ))}
      </div>
      <div className="flex bg-linear-to-b from-[#d6e5f8] to-[#c3d8f3]">
        {sheets.map((name) => (
          <div key={name} className="flex">
            <button
              onClick={() => setActive(name)}
              className={clsx(
                'leading-4 whitespace-nowrap',
                name === active ? 'bg-white pr-0.5 pl-[9px] font-bold' : 'px-[5px]',
              )}
            >
              {name}
            </button>
            <Slash />
          </div>
        ))}
        <button aria-label="Вставить лист" className="px-1"><NewSheetIcon /></button>
      </div>
      <Slash last />
      <div className="ml-auto flex w-[555px] shrink-0 items-center bg-linear-to-b from-[#6d92c6] to-[#8aabd8]">
        <span className="h-[14px] w-[6px] border border-[#6c8fbe] bg-[#eef5fd]" />
        <svg width="5" height="9" className="mr-[7px] ml-[6px]" aria-hidden="true"><path d="M5 0v9L0 4.500z" fill="#2c4f86" /></svg>
        <div className="flex h-[14px] w-[331px] items-center justify-center gap-px rounded-[1px] border border-[#5f7698] bg-linear-to-b from-[#f3f6fa] to-[#c3cddc]">
          {[0, 1, 2, 3].map((n) => (
            <span key={n} className="h-2 w-px bg-[#7888a1]" />
          ))}
        </div>
        <svg width="5" height="9" className="mr-[22px] ml-auto" aria-hidden="true"><path d="M0 0v9l5-4.500z" fill="#2c4f86" /></svg>
      </div>
    </div>
  );
}

function ZoomButton({ label, plus }: { label: string; plus?: boolean }) {
  return (
    <button aria-label={label}>
      <svg width="16" height="16" viewBox="0 0 16 16" aria-hidden="true">
        <circle cx="8" cy="8" r="7" fill="#e8f0fb" stroke="#5672a0" />
        <path d={plus ? 'M4 8h8M8 4v8' : 'M4 8h8'} stroke="#41526e" strokeWidth="2" />
      </svg>
    </button>
  );
}

function StatusBar() {
  return (
    <footer className="flex h-[23px] shrink-0 items-center border-t border-b border-t-[#5d80b3] border-b-[#1f2f48] bg-linear-to-b from-[#dceafc] via-[#b4cff5] to-[#c9defa] text-[#15305f]">
      <span className="pl-[7px]">Готово</span>
      <span className="ml-2 h-[18px] border-l border-[#8db0df]" />
      <div className="ml-auto flex h-full items-center border-l border-[#eaf3ff] bg-linear-to-b from-[#a9c8f2] to-[#7ea6de] pr-[5px] pl-1">
        <div className="flex h-[18px] overflow-hidden rounded-[2px] border border-[#7793bd] bg-[#c3d6ef]">
          <button aria-label="Обычный" className="flex w-[18px] items-center justify-center bg-[#fbd58c]">
            <svg width="13" height="11" viewBox="0 0 13 11" aria-hidden="true">
              <path d="M.5 .5h12v10H.5zM.5 3.500h12M.5 7h12M4.500 0v11M8.500 0v11" fill="#fff" stroke="#5c6675" />
            </svg>
          </button>
          <button aria-label="Разметка страницы" className="flex w-[18px] items-center justify-center">
            <svg width="12" height="12" viewBox="0 0 12 12" aria-hidden="true">
              <path d="M.5 .5h11v11H.5z" fill="#c9ced6" stroke="#5c6675" />
              <path d="M3.500 2.500h5v7h-5z" fill="#fff" stroke="#5c6675" />
              <path d="M4 4.500h4M4 6.500h4" stroke="#8b95a4" />
            </svg>
          </button>
          <button aria-label="Страничный" className="flex w-[18px] items-center justify-center">
            <svg width="13" height="12" viewBox="0 0 13 12" aria-hidden="true">
              <path d="M.5 .5h12v11H.5z" fill="#c9ced6" stroke="#5c6675" />
              <path d="M.5 .5h4v7h-4zM4.500 .5h4v7h-4z" fill="#fff" stroke="#5c6675" />
            </svg>
          </button>
        </div>
        <span className="mx-2">100%</span>
        <ZoomButton label="Уменьшить масштаб" />
        <div className="flex w-[102px] items-center">
          <input
            type="range"
            aria-label="Масштаб"
            defaultValue={50}
            className="h-4 w-full appearance-none bg-[linear-gradient(#5672a0,#5672a0)] bg-[length:100%_1px] bg-center bg-no-repeat [&::-webkit-slider-thumb]:h-3 [&::-webkit-slider-thumb]:w-2 [&::-webkit-slider-thumb]:appearance-none [&::-webkit-slider-thumb]:rounded-b-full [&::-webkit-slider-thumb]:border [&::-webkit-slider-thumb]:border-[#4a648f] [&::-webkit-slider-thumb]:bg-[#e8f0fb]"
          />
        </div>
        <ZoomButton label="Увеличить масштаб" plus />
      </div>
    </footer>
  );
}

export default function App() {
  return (
    <div className="relative flex h-screen flex-col overflow-hidden bg-[#bfdbff] font-['Noto_Sans',sans-serif] text-[11px]">
      <TitleBar />
      <TabStrip />
      <Ribbon />
      <FormulaBar />
      <main className="flex min-h-0 flex-1">
        <Sheet />
        <VerticalScroll />
      </main>
      <SheetBar />
      <StatusBar />
      <button aria-label="Кнопка Office" className="absolute top-[3px] left-[3px]">
        <OfficeLogo />
      </button>
    </div>
  );
}
